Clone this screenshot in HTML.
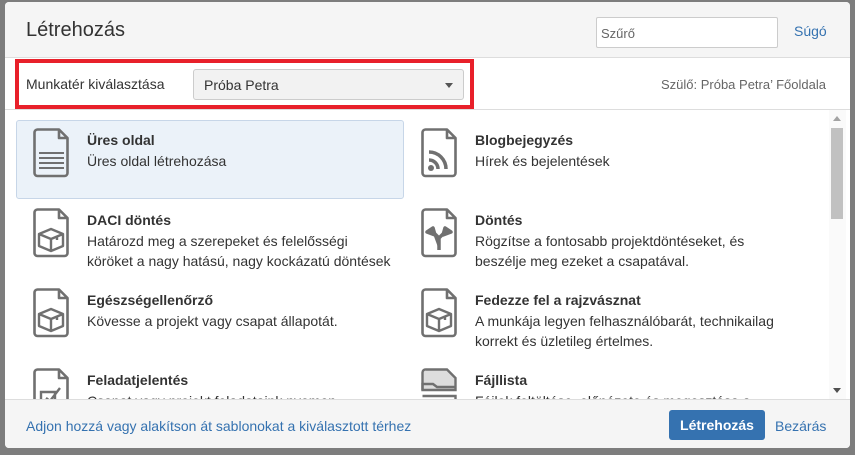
<!DOCTYPE html>
<html><head><meta charset="utf-8"><style>
*{box-sizing:border-box;margin:0;padding:0}
body{width:855px;height:455px;background:#7d7d7d;font-family:"Liberation Sans",Arial,sans-serif;position:relative;overflow:hidden;color:#333}
.modal{position:absolute;left:5px;top:2px;width:845px;height:446px;background:#fff;border-radius:4px;overflow:hidden}
.hdr{position:absolute;left:0;top:0;width:845px;height:56px;background:#f5f5f5;border-bottom:1px solid #ddd}
.hdr h1{position:absolute;left:21px;top:17px;font-size:20px;font-weight:normal;color:#333}
.filter{position:absolute;left:591px;top:15px;width:182px;height:31px;border:1px solid #ccc;background:#fff;border-radius:2px;font-size:13px;color:#666;padding:8px 4px}
.help{position:absolute;left:789px;top:21px;font-size:14px;color:#3572b0}
.sp{position:absolute;left:0;top:57px;width:845px;height:51px;border-bottom:1px solid #ddd}
.red{position:absolute;left:15px;top:59px;width:459px;height:50px;border:4px solid #e8202a}
.lbl{position:absolute;left:21px;top:74px;font-size:14px}
.sel{position:absolute;left:188px;top:67px;width:271px;height:31px;border:1px solid #ccc;border-radius:3px;background:#f2f2f2;font-size:14px;padding:7px 10px}
.sel:after{content:"";position:absolute;right:10px;top:13px;border:4px solid transparent;border-top:5px solid #555}
.par{position:absolute;right:24px;top:75px;font-size:13px;color:#666}
.content{position:absolute;left:0;top:108px;width:845px;height:289px;overflow:hidden}
.hl{position:absolute;left:11px;top:10px;width:388px;height:79px;background:#ebf2f9;border:1px solid #c7d6e8;border-radius:3px}
.it{position:absolute}
.it svg{position:absolute;left:0;top:0}
.it b{position:absolute;left:54px;top:4px;font-size:14px;white-space:nowrap}
.it p{position:absolute;left:54px;top:23px;font-size:14px;line-height:20px;white-space:nowrap}
.sb{position:absolute;left:824px;top:0;width:17px;height:289px;background:#fafafa}
.th{position:absolute;left:2px;top:18px;width:12px;height:91px;background:#c1c1c1}
.up,.dn{position:absolute;left:4px;border:4px solid transparent}
.up{top:2px;border-bottom:5px solid #a3a3a3}
.dn{bottom:2px;border-top:5px solid #505050}
.ft{position:absolute;left:0;top:397px;width:845px;height:49px;background:#f5f5f5;border-top:1px solid #ddd}
.ftl{position:absolute;left:21px;top:18px;font-size:14px;color:#3572b0}
.btn{position:absolute;left:664px;top:10px;width:96px;height:30px;background:#3572b0;border-radius:3px;color:#fff;font-weight:bold;font-size:14px;text-align:center;line-height:30px}
.cl{position:absolute;left:770px;top:18px;font-size:14px;color:#3572b0}
</style></head><body>
<div class="modal">
<div class="hdr"><h1>Létrehozás</h1><div class="filter">Szűrő</div><div class="help">Súgó</div></div>
<div class="sp"></div>
<div class="lbl">Munkatér kiválasztása</div>
<div class="sel">Próba Petra</div>
<div class="par">Szülő: Próba Petra’ Főoldala</div>
<div class="content">
<div class="hl"></div>
<svg width="0" height="0" style="position:absolute"><defs><g id="doc"><path d="M5 1.5H26L34.5 10V45A3 3 0 0 1 31.5 48H4.5A3 3 0 0 1 1.5 45V4.5A3 3 0 0 1 4.5 1.5Z M26 1.5V10H34.5" fill="none" stroke="#707070" stroke-width="2.6" stroke-linejoin="round"/></g><g id="box"><path d="M6 26L18 21L30 26V38L18 43L6 38Z M6 26L18 31L30 26 M18 31V43 M24 29V32" fill="none" stroke="#707070" stroke-width="2.4" stroke-linejoin="round"/></g></defs></svg>
<div class="it" style="left:28px;top:18px"><svg width="37" height="50"><use href="#doc"/><path d="M6 25H31M6 30H31M6 35H31M6 40H31" stroke="#707070" stroke-width="2"/></svg><b>Üres oldal</b><p>Üres oldal létrehozása</p></div>
<div class="it" style="left:416px;top:18px"><svg width="37" height="50"><use href="#doc"/><circle cx="10" cy="40" r="3" fill="#707070"/><path d="M8 32A9 9 0 0 1 17 41M8 24A17 17 0 0 1 25 41" fill="none" stroke="#707070" stroke-width="3.5"/></svg><b>Blogbejegyzés</b><p>Hírek és bejelentések</p></div>
<div class="it" style="left:28px;top:98px"><svg width="37" height="50"><use href="#doc"/><use href="#box"/></svg><b>DACI döntés</b><p>Határozd meg a szerepeket és felelősségi<br>köröket a nagy hatású, nagy kockázatú döntések</p></div>
<div class="it" style="left:416px;top:98px"><svg width="37" height="50"><use href="#doc"/><path d="M18 42V30L11 23M18 30L25 23M6 24L12 20L14 27Z M30 24L24 20L22 27Z" fill="#707070" stroke="#707070" stroke-width="3.5" stroke-linejoin="round"/></svg><b>Döntés</b><p>Rögzítse a fontosabb projektdöntéseket, és<br>beszélje meg ezeket a csapatával.</p></div>
<div class="it" style="left:28px;top:178px"><svg width="37" height="50"><use href="#doc"/><use href="#box"/></svg><b>Egészségellenőrző</b><p>Kövesse a projekt vagy csapat állapotát.</p></div>
<div class="it" style="left:416px;top:178px"><svg width="37" height="50"><use href="#doc"/><use href="#box"/></svg><b>Fedezze fel a rajzvásznat</b><p>A munkája legyen felhasználóbarát, technikailag<br>korrekt és üzletileg értelmes.</p></div>
<div class="it" style="left:28px;top:258px"><svg width="37" height="50"><use href="#doc"/><path d="M8 24H22V36H8Z M13 30L17 33L27 20" fill="none" stroke="#707070" stroke-width="2.4"/></svg><b>Feladatjelentés</b><p>Csapat vagy projekt feladataink nyomon</p></div>
<div class="it" style="left:416px;top:258px"><svg width="37" height="50"><path d="M5 1.5H26L34.5 10V22H1.5V4.5A3 3 0 0 1 5 1.5Z" fill="#ddd" stroke="#707070" stroke-width="2.4"/><path d="M1.5 22V16H12L16 19H34.5 M1.5 28H34.5V45" fill="none" stroke="#707070" stroke-width="2.4"/></svg><b>Fájllista</b><p>Fájlok feltöltése, előnézete és megosztása a</p></div>
<div class="sb"><div class="up"></div><div class="th"></div><div class="dn"></div></div>
</div>
<div class="ft"><div class="ftl">Adjon hozzá vagy alakítson át sablonokat a kiválasztott térhez</div><div class="btn">Létrehozás</div><div class="cl">Bezárás</div></div>
</div>
<div class="red"></div>
</body></html>
